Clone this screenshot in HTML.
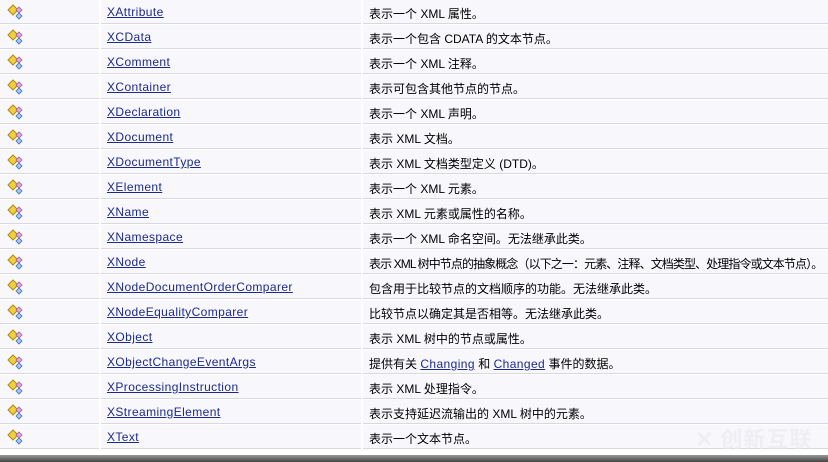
<!DOCTYPE html>
<html><head><meta charset="utf-8"><style>
body{margin:0;width:828px;height:462px;background:#fff;overflow:hidden;position:relative;font-family:"Liberation Sans","Noto Sans CJK SC",sans-serif;font-size:12px;color:#000}
.r{position:absolute;left:0;width:828px;height:24px}
.c{position:absolute;top:0;height:23px;background:#f7f7fc;border-bottom:1px solid #d8d8e0}
.c1{left:0;width:99px}.c2{left:101px;width:260px}.c3{left:363px;width:465px}
.c2 a{position:absolute;left:6px;top:5px;color:#1c2a8c;text-decoration:underline;font-family:"Liberation Sans","DejaVu Sans",sans-serif;font-size:12px;letter-spacing:0.4px}
.c3 span{position:absolute;left:6px;top:5px;white-space:nowrap}
.c3 a{color:#1c2a8c;text-decoration:underline;letter-spacing:0.4px}
svg{position:absolute;left:7px;top:3px}
.bot{position:absolute;left:0;top:455px;width:828px;height:7px;background:linear-gradient(#999,#444)}
.wm{position:absolute;left:695px;top:422px;color:rgba(235,235,240,.75);font-size:22px;font-weight:bold;font-family:"Noto Sans CJK SC",sans-serif;letter-spacing:1px}
</style></head><body>
<div id="t"></div>
<script>
var d=[["XAttribute","表示一个 XML 属性。"],["XCData","表示一个包含 CDATA 的文本节点。"],["XComment","表示一个 XML 注释。"],["XContainer","表示可包含其他节点的节点。"],["XDeclaration","表示一个 XML 声明。"],["XDocument","表示 XML 文档。"],["XDocumentType","表示 XML 文档类型定义 (DTD)。"],["XElement","表示一个 XML 元素。"],["XName","表示 XML 元素或属性的名称。"],["XNamespace","表示一个 XML 命名空间。无法继承此类。"],["XNode","<span style=\"letter-spacing:-0.9px;position:static\">表示 XML 树中节点的抽象概念（以下之一：元素、注释、文档类型、处理指令或文本节点）。</span>"],["XNodeDocumentOrderComparer","包含用于比较节点的文档顺序的功能。无法继承此类。"],["XNodeEqualityComparer","比较节点以确定其是否相等。无法继承此类。"],["XObject","表示 XML 树中的节点或属性。"],["XObjectChangeEventArgs","提供有关 <a>Changing</a> 和 <a>Changed</a> 事件的数据。"],["XProcessingInstruction","表示 XML 处理指令。"],["XStreamingElement","表示支持延迟流输出的 XML 树中的元素。"],["XText","表示一个文本节点。"]];
var ic='<svg width="22" height="18" viewBox="0 0 22 18"><path d="M1 7 L6 2 L11 7 L6 12Z" fill="#f0d040" stroke="#b08a10"/><path d="M12 4 L15 7 L12 10 L9 7Z" fill="#e0a8e0" stroke="#a060a0" stroke-width=".8"/><path d="M12 10 L15 13 L12 16 L9 13Z" fill="#a8c8f0" stroke="#4070b0" stroke-width=".8"/></svg>';
var h='';d.forEach(function(x,i){h+='<div class="r" style="top:'+(i*25)+'px"><div class="c c1">'+ic+'</div><div class="c c2"><a>'+x[0]+'</a></div><div class="c c3"><span>'+x[1]+'</span></div></div>';});
document.getElementById('t').innerHTML=h;
</script>
<div class="wm">✕ 创新互联</div>
<div class="bot"></div>
</body></html>
